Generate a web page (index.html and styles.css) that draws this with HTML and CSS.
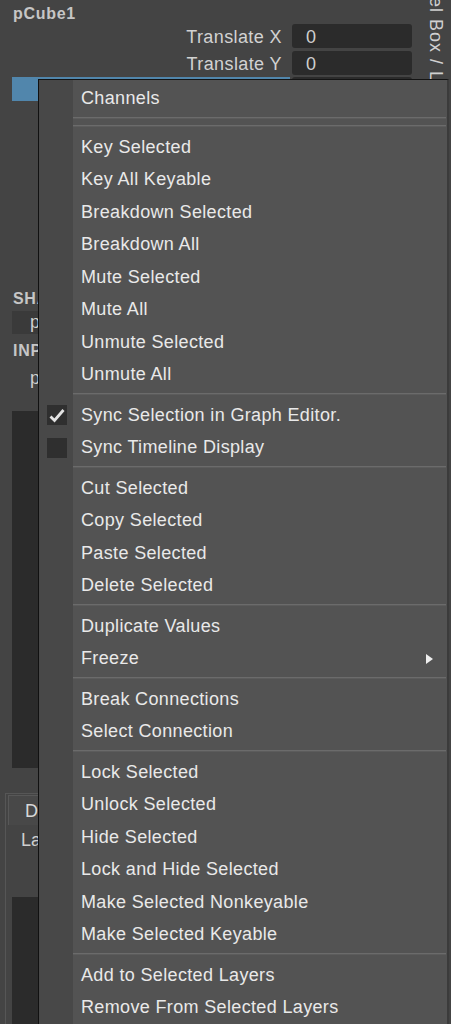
FILE: index.html
```html
<!DOCTYPE html>
<html>
<head>
<meta charset="utf-8">
<link rel="stylesheet" href="styles.css">
</head>
<body>
<div class="app">
  <div class="panel">
    <div class="title">pCube1</div>
    <div class="attrs">
      <div class="row"><div class="label">Translate X</div><div class="field">0</div></div>
      <div class="row"><div class="label">Translate Y</div><div class="field">0</div></div>
      <div class="row"><div class="label sel">Translate Z</div><div class="field">0</div></div>
    </div>
    <div class="section shapes">SHAPES</div>
    <div class="namefield">pCubeShape1</div>
    <div class="section inputs">INPUTS</div>
    <div class="name">polyCube1</div>
    <div class="darkpanel"></div>
    <div class="layerbox">
      <div class="tabs"><div class="tab">Display</div><div class="tab">Anim</div></div>
      <div class="layermenu">Layers</div>
      <div class="darkpanel2"></div>
    </div>
  </div>
  <div class="sidetab">Channel Box / Layer Editor</div>
</div>

<div class="menu">
  <div class="item"><span class="gut"></span><span class="txt">Channels</span></div>
  <div class="sep"></div>
  <div class="sep"></div>
  <div class="item"><span class="gut"></span><span class="txt">Key Selected</span></div>
  <div class="item"><span class="gut"></span><span class="txt">Key All Keyable</span></div>
  <div class="item"><span class="gut"></span><span class="txt">Breakdown Selected</span></div>
  <div class="item"><span class="gut"></span><span class="txt">Breakdown All</span></div>
  <div class="item"><span class="gut"></span><span class="txt">Mute Selected</span></div>
  <div class="item"><span class="gut"></span><span class="txt">Mute All</span></div>
  <div class="item"><span class="gut"></span><span class="txt">Unmute Selected</span></div>
  <div class="item"><span class="gut"></span><span class="txt">Unmute All</span></div>
  <div class="sep"></div>
  <div class="item"><span class="gut"><span class="check"><svg viewBox="0 0 20 20" width="20" height="20"><path d="M3.5 11.5 L7.5 15.5 L16.5 5" fill="none" stroke="#e2e2e2" stroke-width="2.8"/></svg></span></span><span class="txt">Sync Selection in Graph Editor.</span></div>
  <div class="item"><span class="gut"><span class="check"></span></span><span class="txt">Sync Timeline Display</span></div>
  <div class="sep"></div>
  <div class="item"><span class="gut"></span><span class="txt">Cut Selected</span></div>
  <div class="item"><span class="gut"></span><span class="txt">Copy Selected</span></div>
  <div class="item"><span class="gut"></span><span class="txt">Paste Selected</span></div>
  <div class="item"><span class="gut"></span><span class="txt">Delete Selected</span></div>
  <div class="sep"></div>
  <div class="item"><span class="gut"></span><span class="txt">Duplicate Values</span></div>
  <div class="item"><span class="gut"></span><span class="txt">Freeze</span><span class="arrow"></span></div>
  <div class="sep"></div>
  <div class="item"><span class="gut"></span><span class="txt">Break Connections</span></div>
  <div class="item"><span class="gut"></span><span class="txt">Select Connection</span></div>
  <div class="sep"></div>
  <div class="item"><span class="gut"></span><span class="txt">Lock Selected</span></div>
  <div class="item"><span class="gut"></span><span class="txt">Unlock Selected</span></div>
  <div class="item"><span class="gut"></span><span class="txt">Hide Selected</span></div>
  <div class="item"><span class="gut"></span><span class="txt">Lock and Hide Selected</span></div>
  <div class="item"><span class="gut"></span><span class="txt">Make Selected Nonkeyable</span></div>
  <div class="item"><span class="gut"></span><span class="txt">Make Selected Keyable</span></div>
  <div class="sep"></div>
  <div class="item"><span class="gut"></span><span class="txt">Add to Selected Layers</span></div>
  <div class="item"><span class="gut"></span><span class="txt">Remove From Selected Layers</span></div>
</div>
</body>
</html>
```

FILE: styles.css
```css
html, body {
  margin: 0;
  padding: 0;
}
body {
  width: 451px;
  height: 1024px;
  overflow: hidden;
  background: #444444;
  font-family: "Liberation Sans", Arial, sans-serif;
  position: relative;
}
.app {
  position: relative;
  height: 1024px;
  overflow: hidden;
}
.panel {
  padding-left: 12px;
  width: 400px;
}
.title {
  padding-top: 4px;
  padding-left: 1px;
  height: 20px;
  line-height: 20px;
  font-size: 16px;
  font-weight: bold;
  letter-spacing: 0.7px;
  color: #c6c6c6;
}
.attrs {
  display: flex;
  flex-direction: column;
  gap: 2.5px;
}
.row {
  display: flex;
  height: 24px;
  gap: 2px;
}
.label {
  width: 278px;
  text-align: right;
  padding-right: 8px;
  box-sizing: border-box;
  font-size: 18px;
  letter-spacing: 0.4px;
  line-height: 27px;
  height: 24px;
  color: #d2d2d2;
}
.label.sel {
  background: #5186ac;
  color: #eeeeee;
}
.field {
  width: 120px;
  height: 24px;
  background: #2b2b2b;
  border-radius: 3px;
  font-size: 18px;
  line-height: 27px;
  color: #cfcfcf;
  padding-left: 14px;
  box-sizing: border-box;
}
.section {
  font-size: 16px;
  font-weight: bold;
  letter-spacing: 0.7px;
  color: #c6c6c6;
  padding-left: 1px;
  height: 16px;
  line-height: 16px;
}
.shapes {
  margin-top: 190px;
}
.namefield {
  margin-top: 4px;
  height: 23px;
  line-height: 23px;
  background: #3a3a3a;
  padding-left: 18px;
  font-size: 18px;
  color: #cfcfcf;
  letter-spacing: 0.3px;
}
.inputs {
  margin-top: 9px;
}
.name {
  margin-top: 8px;
  height: 22px;
  line-height: 22px;
  padding-left: 18px;
  font-size: 18px;
  color: #cfcfcf;
  letter-spacing: 0.3px;
}
.darkpanel {
  margin-top: 22px;
  height: 357px;
  background: #2b2b2b;
}
.layerbox {
  margin-top: 25px;
  margin-left: -7px;
  border-left: 1px solid #565656;
  border-top: 1px solid #565656;
  padding-left: 2px;
}
.tabs {
  display: flex;
  height: 30px;
  padding-top: 1px;
}
.tab {
  padding: 0 12px 0 16px;
  line-height: 30px;
  font-size: 18px;
  color: #d8d8d8;
  border: 1px solid #585858;
  border-bottom: none;
  background: #484848;
}
.layermenu {
  height: 30px;
  line-height: 30px;
  padding-left: 13px;
  font-size: 18px;
  color: #cfcfcf;
}
.darkpanel2 {
  margin-top: 42px;
  margin-left: 4px;
  height: 200px;
  background: #2b2b2b;
}
.sidetab {
  position: absolute;
  left: 424px;
  top: -61px;
  width: 24px;
  height: 150px;
  overflow: hidden;
  writing-mode: vertical-rl;
  font-size: 18px;
  line-height: 24px;
  letter-spacing: 1px;
  color: #d0d0d0;
  white-space: nowrap;
}

/* Context menu (popup overlay) */
.menu {
  position: absolute;
  left: 38px;
  top: 79px;
  width: 411px;
  height: 945px;
  box-sizing: border-box;
  border-top: 1px solid #141414;
  border-left: 1px solid #111111;
  border-right: 2px solid #3b3b3b;
  padding-top: 2.5px;
  background: linear-gradient(to right, #484848 0, #484848 34px, #535353 34px);
  font-size: 18px;
  letter-spacing: 0.35px;
  color: #e9e9e9;
  z-index: 5;
  overflow: hidden;
}
.item {
  display: flex;
  align-items: center;
  height: 32.5px;
}
.gut {
  width: 34px;
  height: 100%;
  display: flex;
  align-items: center;
  flex: none;
}
.txt {
  padding-left: 8px;
  flex: 1;
  white-space: nowrap;
}
.check {
  width: 20px;
  height: 20px;
  margin-left: 8px;
  background: #2f2f2f;
  display: block;
}
.check svg {
  display: block;
}
.arrow {
  width: 0;
  height: 0;
  border-left: 7px solid #eeeeee;
  border-top: 5.5px solid transparent;
  border-bottom: 5.5px solid transparent;
  margin-right: 14px;
}
.sep {
  height: 8px;
  margin-left: 34px;
  margin-right: 1px;
  position: relative;
}
.sep::before {
  content: "";
  position: absolute;
  left: 0;
  right: 0;
  top: 2px;
  height: 1px;
  background: #6b6b6b;
  border-bottom: 1px solid #5c5c5c;
}
```
